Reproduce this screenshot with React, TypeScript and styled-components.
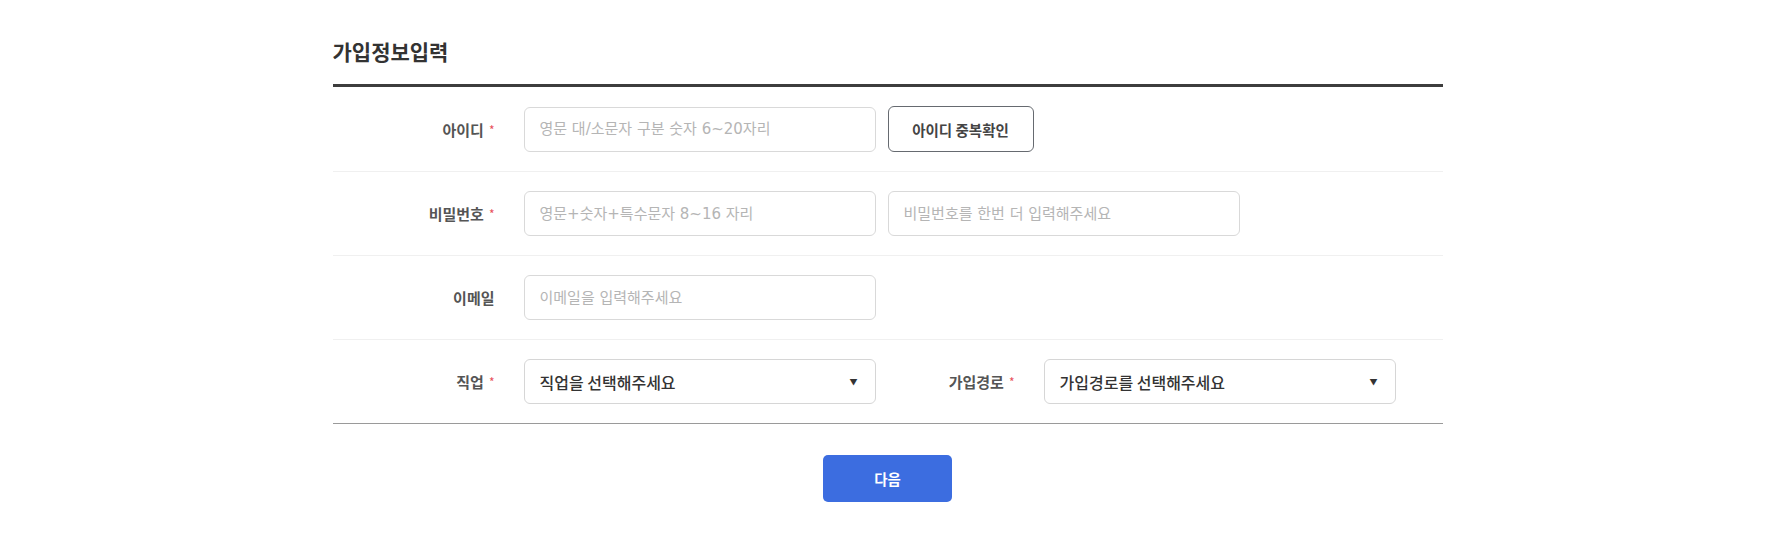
import React from 'react';
import styled, { createGlobalStyle } from 'styled-components';

const GlobalStyle = createGlobalStyle`
    body {
        margin: 0;
        background: #ffffff;
        font-family: "Noto Sans CJK KR", "Noto Sans", sans-serif;
        color: #333333;
    }
`;

const Page = styled.div`
    width: 1110px;
    margin: 0 auto;
    padding-top: 37px;
`;

const Title = styled.h2`
    margin: 0 0 19px 0;
    font-size: 21px;
    line-height: 28px;
    font-weight: 700;
    color: #333333;
`;

const FormList = styled.div`
    border-top: 3px solid #3d3d3d;
    border-bottom: 1px solid #9a9a9a;
`;

const Row = styled.div`
    display: flex;
    align-items: center;
    padding: 19px 0;
    border-bottom: 1px solid #f0f0f0;

    &:last-child {
        border-bottom: none;
    }
`;

const Label = styled.label<{ $width: number; $offset?: number }>`
    width: ${(p) => p.$width}px;
    margin-left: ${(p) => p.$offset || 0}px;
    margin-right: 29px;
    text-align: right;
    font-size: 15px;
    font-weight: 700;
    color: #555555;
    flex-shrink: 0;
`;

const Required = styled.span`
    margin-left: 5px;
    color: #e8505b;
    font-size: 12px;
    font-weight: 400;
    vertical-align: 1px;
`;

const TextInput = styled.input`
    box-sizing: border-box;
    width: 352px;
    height: 45px;
    padding: 0 15px;
    border: 1px solid #d9d9d9;
    border-radius: 6px;
    font-family: "DejaVu Sans", "Noto Sans CJK KR", sans-serif;
    font-size: 15px;
    color: #333333;
    outline: none;

    &::placeholder {
        color: #b5b5b5;
    }

    & + & {
        margin-left: 12px;
    }
`;

const SelectBox = styled.div`
    box-sizing: border-box;
    width: 352px;
    height: 45px;
    padding: 0 17px 0 15px;
    display: flex;
    align-items: center;
    justify-content: space-between;
    border: 1px solid #d6d6d6;
    border-radius: 6px;
    font-size: 16px;
    font-weight: 500;
    color: #333333;
`;

const Arrow = styled.span`
    font-size: 8px;
    color: #333333;
`;

const CheckButton = styled.button`
    box-sizing: border-box;
    margin-left: 12px;
    width: 146px;
    height: 46px;
    border: 1px solid #666a70;
    border-radius: 6px;
    background: #ffffff;
    font-family: inherit;
    font-size: 14.5px;
    font-weight: 700;
    color: #444444;
`;

const Footer = styled.div`
    display: flex;
    justify-content: center;
    padding-top: 31px;
`;

const NextButton = styled.button`
    width: 129px;
    height: 47px;
    border: none;
    border-radius: 5px;
    background: #3c6de0;
    font-family: inherit;
    font-size: 14.5px;
    font-weight: 700;
    color: #ffffff;
`;

const App = () => {
    return (
        <React.Fragment>
            <GlobalStyle />
            <Page>
                <Title>가입정보입력</Title>
                <FormList>
                    <Row>
                        <Label $width={162}>아이디<Required>*</Required></Label>
                        <TextInput placeholder="영문 대/소문자 구분 숫자 6~20자리" />
                        <CheckButton>아이디 중복확인</CheckButton>
                    </Row>
                    <Row>
                        <Label $width={162}>비밀번호<Required>*</Required></Label>
                        <TextInput type="password" placeholder="영문+숫자+특수문자 8~16 자리" />
                        <TextInput type="password" placeholder="비밀번호를 한번 더 입력해주세요" />
                    </Row>
                    <Row>
                        <Label $width={162}>이메일</Label>
                        <TextInput placeholder="이메일을 입력해주세요" />
                    </Row>
                    <Row>
                        <Label $width={162}>직업<Required>*</Required></Label>
                        <SelectBox>
                            직업을 선택해주세요
                            <Arrow>▼</Arrow>
                        </SelectBox>
                        <Label $width={130} $offset={9}>가입경로<Required>*</Required></Label>
                        <SelectBox>
                            가입경로를 선택해주세요
                            <Arrow>▼</Arrow>
                        </SelectBox>
                    </Row>
                </FormList>
                <Footer>
                    <NextButton>다음</NextButton>
                </Footer>
            </Page>
        </React.Fragment>
    );
};

export default App;
